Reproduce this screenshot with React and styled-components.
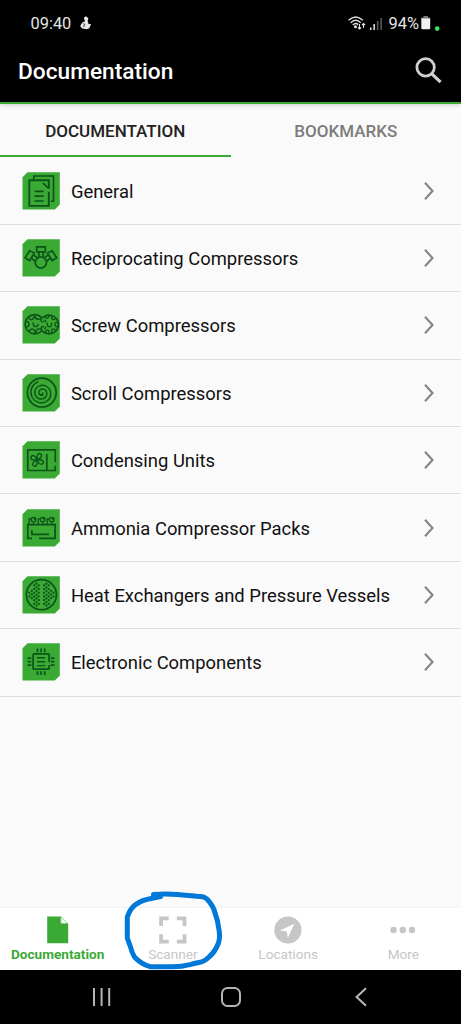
import React from 'react';
import styled, { createGlobalStyle } from 'styled-components';

const GREEN = '#3aaa35';
const INK = '#0c5418';

const GlobalStyle = createGlobalStyle`
  * { box-sizing: border-box; }
  body { margin: 0; background: #fafafa; font-family: Roboto, "Liberation Sans", sans-serif; }
  svg { display: block; flex: none; }
`;

const Screen = styled.div`
  position: relative;
  display: flex;
  flex-direction: column;
  width: 461px;
  height: 1024px;
  overflow: hidden;
  background: #fafafa;
`;

const StatusBar = styled.div`
  display: flex;
  align-items: center;
  justify-content: space-between;
  height: 46px;
  padding: 0 21px 0 30.5px;
  background: #000;
  color: #e4e4e4;
  font-size: 16.4px;
`;

const StatusGroup = styled.div`
  display: flex;
  align-items: center;
  gap: ${(p) => p.$gap}px;
`;

const Header = styled.header`
  display: flex;
  align-items: center;
  justify-content: space-between;
  height: 58px;
  padding: 0 19.4px 8px 18px;
  background: #000;
  border-bottom: 2.5px solid ${GREEN};
  box-shadow: 0 1px 4px rgba(0, 0, 0, 0.18);
  z-index: 1;
`;

const Title = styled.h1`
  margin: 0;
  padding-top: 4px;
  color: #fff;
  font-size: 22.7px;
  line-height: 28px;
  font-weight: 500;
`;

const Tabs = styled.div`
  display: grid;
  grid-template-columns: 1fr 1fr;
  height: 53.4px;
`;

const Tab = styled.div`
  display: flex;
  align-items: center;
  justify-content: center;
  padding-top: 3px;
  font-size: 17px;
  font-weight: 500;
  color: ${(p) => (p.$active ? '#212121' : '#7c7c7c')};
  border-bottom: 2px solid ${(p) => (p.$active ? GREEN : 'transparent')};
`;

const List = styled.ul`
  flex: 1;
  margin: 0;
  padding: 0;
  list-style: none;
`;

const Row = styled.li`
  display: flex;
  align-items: center;
  height: 67.4px;
  padding: 0 27px 0 22.4px;
  border-bottom: 1.5px solid #dedede;
`;

const Label = styled.span`
  flex: 1;
  padding: 2px 0 0 11.2px;
  color: #111;
  font-size: 18.42px;
  line-height: 24px;
  white-space: nowrap;
`;

const BottomBar = styled.nav`
  display: grid;
  grid-template-columns: repeat(4, 1fr);
  height: 62.4px;
  background: #fff;
  box-shadow: 0 -1px 2px rgba(0, 0, 0, 0.04);
`;

const BottomItem = styled.div`
  display: flex;
  flex-direction: column;
  align-items: center;
  padding-top: 8px;
  gap: 1.5px;
  color: ${(p) => (p.$active ? GREEN : '#c6c6c6')};
  font-size: 13.6px;
  line-height: 18px;
  font-weight: ${(p) => (p.$active ? 700 : 400)};
`;

const SystemBar = styled.div`
  display: grid;
  grid-template-columns: 1fr 1fr 1fr;
  align-items: center;
  justify-items: center;
  height: 54px;
  padding: 0 35px 0 37px;
  background: #000;
`;

const Scribble = styled.svg`
  position: absolute;
  left: 120px;
  top: 886px;
  pointer-events: none;
`;

const TileSvg = styled.svg`
  width: 38px;
  height: 38px;
  margin-right: -0.7px;
`;

const Tile = ({ children }) => (
  <TileSvg viewBox="-0.5 -0.2 38 38">
    <path d="M5 0H37.3V32.3L32.3 37.3H0V5Z" fill={GREEN} />
    <g fill="none" stroke={INK} strokeWidth="1.7">{children}</g>
  </TileSvg>
);

const GeneralIcon = () => (
  <Tile>
    <path d="M11.3 7.2V3.8H31V29H28.4" />
    <path d="M26.3 16.5V8H6.8V33.7H26.3V19.5" strokeWidth="1.9" />
    <path d="M20.4 11L26.3 16.2" />
    <path d="M12 19.2H21.2M12 24H21.2M12 28.8H21.2" />
  </Tile>
);

const ReciprocatingIcon = () => (
  <Tile>
    <circle cx="18.4" cy="23.3" r="5.6" />
    <path d="M14.2 7.7H22.8V12.6H14.2ZM16.4 12.6V17.5M20.6 12.6V17.5" />
    <path d="M7.2 11.5L11.8 13.9L7.2 21.3L2.6 18.6Z" />
    <path d="M29.6 11.5L25 13.9L29.6 21.3L34.2 18.6Z" />
    <path d="M10.7 15.6L14.9 18.4M8.9 19L12.8 22.2M26.1 15.6L21.9 18.4M27.9 19L24 22.2" />
  </Tile>
);

const ScrewIcon = () => (
  <Tile>
    <path d="M19 11.2A9.6 9.6 0 1 0 19 24.8" />
    <path d="M19.6 12A9.4 9.4 0 1 1 19.6 24.6" />
    <path d="M6.2 11C8 15 11 14 12 9.3C13 14 17 14 18.8 11.5C17.6 15.2 19 16.2 21.6 15.5M3.6 21C7.6 20.4 7.6 15.8 3.6 15M6.5 25C10 21 12 23 13 27C14 22 17 21.5 19.6 24.5C17.5 21 19 20 21.6 20.5" strokeWidth="1.4" />
    <path d="M11 16C10 18 11 20.4 13.2 20.4C15 20.4 15.7 19 15.7 17.5M25 16.5C24 19 25 20.6 27 20.6C29 20.6 29.8 18.5 28.5 16.5" strokeWidth="1.4" />
    <path d="M23 9.8C23 13 26 13 27 9.2M29.4 9.6C28.4 14 31 14 33 12.2M35.4 16C31.4 15.6 31.4 20 35.2 21M33 24C30 21.4 28 23 29.7 26.6M26.5 27C27 22.4 23.4 23 22.6 26.4M21.8 13.5L23.6 15.8M21.7 23L23.6 20.8" strokeWidth="1.3" />
  </Tile>
);

const ScrollIcon = () => (
  <Tile>
    <circle cx="19.3" cy="18.4" r="14.4" />
    <path
      d="M20.6 20.8C18 22 15.9 19.9 16.5 17.5C17.2 14.6 21 13.7 23.2 16.2C25.7 19.1 23.9 24 19.8 24.7C15 25.5 11.5 21.5 12.4 16.9C13.4 11.8 19.6 9.6 24.1 12.3C29.2 15.4 29.5 22.7 25.2 26.3C19.6 31 11.2 28.1 9 21.4C7 15.5 10.4 9.2 16 7.4"
      strokeWidth="1.4"
    />
    <path d="M20.1 18.4C20.6 20 19.5 20.9 18.4 20.4" />
  </Tile>
);

const CondensingIcon = () => (
  <Tile>
    <path d="M32.8 21V8.6H5.3V29.3H32.8V24.5M24.3 12.8V29" />
    <g transform="translate(14.6 18.7)" strokeWidth="1.4">
      {[0, 90, 180, 270].map((a) => (
        <path key={a} transform={`rotate(${a + 35})`} d="M0 -1C-3.8 -3-3-6.8-.4-6.8C2.2-6.8 2-3.6 .7-.9" />
      ))}
      <circle r="1" />
    </g>
  </Tile>
);

const AmmoniaIcon = () => (
  <Tile>
    <path d="M9.5 29.2H5.3V15.5H32.6V29.2H16.5M9.4 20.7V25.2H26.5" />
    <g strokeWidth="1.3">
      <path d="M6.6 15V8.5M15.7 15V9M24.7 15V9M6.6 10H8.6M15.7 10H17.7M24.7 10H26.5M11 13V15M20.2 13V15M29.2 13V15" />
      <circle cx="11" cy="10.4" r="2.3" />
      <circle cx="20.2" cy="10.4" r="2.3" />
      <circle cx="29.2" cy="10.4" r="2.3" />
      <path d="M11.3 10.3L13.2 8.3M20.5 10.3L22.4 8.3M29.5 10.3L31.4 8.3" />
    </g>
  </Tile>
);

const exchangerColumns = [
  [6.8, [16.4, 20.2]],
  [9.3, [14.6, 18.3, 22]],
  [11.7, [9.2, 12.9, 16.6, 20.3, 24, 27.7]],
  [14, [7.5, 11.2, 14.9, 18.6, 22.3, 26, 29.4]],
  [16.2, [9.2, 12.9, 16.6, 20.3, 24, 27.7]],
  [21.6, [9.2, 12.9, 16.6, 20.3, 24, 27.7]],
  [23.9, [7.5, 11.2, 14.9, 18.6, 22.3, 26, 29.4]],
  [26.2, [9.2, 12.9, 16.6, 20.3, 24, 27.7]],
  [28.6, [14.6, 18.3, 22]],
  [31, [16.4, 20.2]],
];

const ExchangerIcon = () => (
  <Tile>
    <circle cx="18.9" cy="18.5" r="15" />
    <g fill={INK} stroke="none">
      {exchangerColumns.map(([x, ys]) => ys.map((y) => <circle key={`${x}-${y}`} cx={x} cy={y} r="1.15" />))}
    </g>
  </Tile>
);

const ElectronicIcon = () => (
  <Tile>
    <path d="M26.6 21.8V25Q26.6 26 25.6 26H11.6Q10.6 26 10.6 25V11.7Q10.6 10.7 11.6 10.7H25.6Q26.6 10.7 26.6 11.7V18.8" />
    <path d="M14.4 14.6H22.6M14.4 18.5H22.6M14.4 22.4H22.6" strokeWidth="1.4" />
    <path d="M15 5.3V9M18.6 5.3V9M22.2 5.3V9M15 28V31.8M18.6 28V31.8M22.2 28V31.8M5 15H8.8M5 18.5H8.8M5 22H8.8M28.2 15H32M28.2 18.5H32M28.2 22H32" />
  </Tile>
);

const Chevron = () => (
  <svg width="10" height="20" viewBox="0 0 10 20">
    <path d="M1 1.8L8.5 10L1 18.2" fill="none" stroke="#858585" strokeWidth="2.1" />
  </svg>
);

const rows = [
  ['General', GeneralIcon],
  ['Reciprocating Compressors', ReciprocatingIcon],
  ['Screw Compressors', ScrewIcon],
  ['Scroll Compressors', ScrollIcon],
  ['Condensing Units', CondensingIcon],
  ['Ammonia Compressor Packs', AmmoniaIcon],
  ['Heat Exchangers and Pressure Vessels', ExchangerIcon],
  ['Electronic Components', ElectronicIcon],
];

const NotificationIcon = () => (
  <svg width="12" height="14" viewBox="0 0 12 14" fill="#e8e8e8">
    <path d="M4 2L5.2 .5L6.8 .7L8.4 2.6L7.6 5L8.6 8L11.2 8.2L10 10.5L9.4 12.2L6.6 13.2L2.4 12.5L.3 10.6L1 8.3L3 6L4.5 5.7L5 4L4 3.3Z" />
    <path d="M3.4 7.7L5.2 8.6M3 10L5 10" stroke="#000" strokeWidth=".8" />
  </svg>
);

const WifiIcon = () => (
  <svg width="18" height="14" viewBox="0 0 18 14" fill="none" stroke="#e4e4e4" strokeWidth="1.4">
    <path d="M.6 4.3Q7.7-2.5 14.8 4.3M2.7 6.7Q7.7 2 12.7 6.7M4.8 9Q7.7 6.4 10.2 8.6" />
    <circle cx="7.5" cy="10.8" r=".8" fill="#e4e4e4" />
    <path d="M11.5 8V13M10 11.5L11.5 13L13 11.5M15.5 12V7.7M14 9L15.5 7.5L17 9" strokeWidth="1.1" />
  </svg>
);

const SignalIcon = () => (
  <svg width="13" height="13" viewBox="0 0 13 13">
    <path d="M0 10.5H1.5V13H0ZM3.4 7H4.9V13H3.4Z" fill="#e4e4e4" />
    <path d="M6.9 4H8.4V13H6.9ZM10.4 1H11.9V13H10.4Z" fill="#5d5d5d" />
  </svg>
);

const BatteryIcon = () => (
  <svg width="19" height="16" viewBox="0 0 19 16">
    <path d="M2.5 1H7V2.4H9V4H.3V2.4H2.5Z" fill="#777" />
    <path d="M.3 3.6H9.2V13.2Q9.2 14.2 8.2 14.2H1.3Q.3 14.2 .3 13.2Z" fill="#f0f0f0" />
    <circle cx="16.2" cy="13.6" r="2.3" fill="#35ed55" />
  </svg>
);

const SearchIcon = () => (
  <svg width="27" height="27" viewBox="0 0 27 27" fill="none" stroke="#cfcfcf">
    <circle cx="10.6" cy="10.4" r="8.7" strokeWidth="2.8" />
    <path d="M16.8 16.8L25.6 25.2" strokeWidth="3.2" />
  </svg>
);

const DocIcon = () => (
  <svg width="28" height="28" viewBox="0 0 28 28">
    <path d="M3.2 .5H16.7V7.8H24.2V27.3H3.2Z" fill={GREEN} />
    <path d="M16.9 .8L23.9 7.6H16.9Z" fill="#fff" stroke={GREEN} strokeWidth=".6" />
  </svg>
);

const ScannerIcon = () => (
  <svg width="28" height="28" viewBox="0 0 28 28" fill="none" stroke="#c6c6c6" strokeWidth="3.8">
    <path d="M2.1 10V2.4H9.7M17.9 2.4H25.5V10M25.5 18.2V25.6H17.9M9.7 25.6H2.1V18.2" />
  </svg>
);

const LocationIcon = () => (
  <svg width="28" height="28" viewBox="0 0 28 28">
    <circle cx="13.9" cy="14" r="13.6" fill="#c6c6c6" />
    <path d="M20.3 7.8L13.8 22L12.8 15.4L5.8 14.4Z" fill="#fff" />
  </svg>
);

const MoreIcon = () => (
  <svg width="28" height="28" viewBox="0 0 28 28" fill="#c6c6c6">
    <circle cx="4.6" cy="14" r="3.2" />
    <circle cx="13.8" cy="14" r="3.2" />
    <circle cx="23" cy="14" r="3.2" />
  </svg>
);

const tabs = [
  ['Documentation', DocIcon],
  ['Scanner', ScannerIcon],
  ['Locations', LocationIcon],
  ['More', MoreIcon],
];

export default function App() {
  return (
    <>
      <GlobalStyle />
      <Screen>
        <StatusBar>
          <StatusGroup $gap={9}>
            <span>09:40</span>
            <NotificationIcon />
          </StatusGroup>
          <StatusGroup $gap={6}>
            <StatusGroup $gap={4}>
              <WifiIcon />
              <SignalIcon />
            </StatusGroup>
            <StatusGroup $gap={2}>
              <span>94%</span>
              <BatteryIcon />
            </StatusGroup>
          </StatusGroup>
        </StatusBar>
        <Header>
          <Title>Documentation</Title>
          <SearchIcon />
        </Header>
        <Tabs>
          <Tab $active>DOCUMENTATION</Tab>
          <Tab>BOOKMARKS</Tab>
        </Tabs>
        <List>
          {rows.map(([label, Icon]) => (
            <Row key={label}>
              <Icon />
              <Label>{label}</Label>
              <Chevron />
            </Row>
          ))}
        </List>
        <BottomBar>
          {tabs.map(([label, Icon], i) => (
            <BottomItem key={label} $active={i === 0}>
              <Icon />
              <span>{label}</span>
            </BottomItem>
          ))}
        </BottomBar>
        <SystemBar>
          <svg width="20" height="20" viewBox="0 0 20 20" stroke="#b5b5b5" strokeWidth="2">
            <path d="M2 1V19M9.6 1V19M17.2 1V19" />
          </svg>
          <svg width="22" height="22" viewBox="0 0 22 22" fill="none" stroke="#b5b5b5" strokeWidth="2">
            <rect x="2" y="2" width="18" height="18" rx="5.5" />
          </svg>
          <svg width="14" height="20" viewBox="0 0 14 20" fill="none" stroke="#b5b5b5" strokeWidth="2.1">
            <path d="M12 1.2L2.6 10L12 18.8" />
          </svg>
        </SystemBar>
        <Scribble width="106" height="86" viewBox="120 886 106 86" fill="none" stroke="#0078d7" strokeWidth="5" strokeLinecap="round" strokeLinejoin="round">
          <path d="M160.5 896.5L153.5 894.5Q166 893.5 177 894.5L197 896.3Q204 896.3 207 899Q213.5 906 215 913Q218 921 218.7 928Q220.5 937 218.5 943Q215 952 209 957Q204 962 199 962.5Q195 963 191 964.3Q181 967 170 966.7H150Q141 964 134.5 957Q132 953 130.5 947L127.3 938V917Q130 909 135 905Q142 900 150 898.8L160.5 896.5" />
        </Scribble>
      </Screen>
    </>
  );
}
